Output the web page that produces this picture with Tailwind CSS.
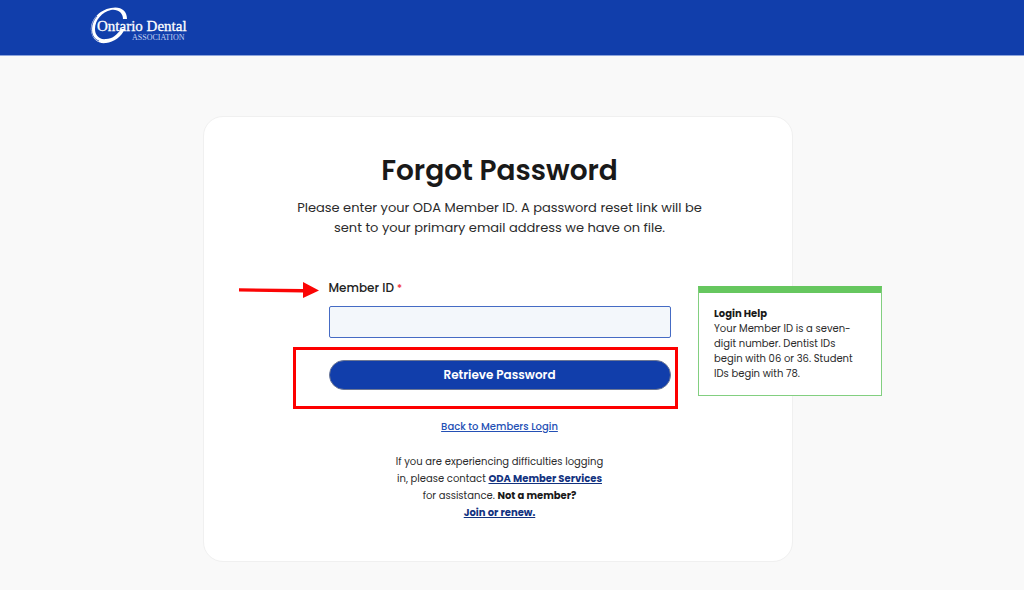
<!DOCTYPE html>
<html lang="en">
<head>
  <meta charset="UTF-8" />
  <meta name="viewport" content="width=device-width, initial-scale=1.0"/>
  <title>Forgot Password - Ontario Dental Association</title>
  <script src="https://cdn.jsdelivr.net/npm/@tailwindcss/browser@4"></script>
</head>
<body class="min-h-screen bg-[#f9f9f9] font-[Poppins,Inter,sans-serif] text-[#2b2b2b]">

  <!-- Header -->
  <header class="h-14 bg-[#113eab] border-b border-[#8da4dc] px-[88px] py-1">
    <a href="#" aria-label="Ontario Dental Association" class="inline-block">
      <svg class="h-11 w-[104px]" viewBox="0 0 104 44" fill="white">
        <path d="M39 15C39 6 32 2 23 4C11 6 2 16 3 27C4 35 10 40 18 39C26 38 33 33 37 25L33 25C29 31 24 35 18 35C11 36 7 31 7 25C7 16 14 8 23 6C30 5 35 9 35 15Z"/>
        <path d="M9 12C1 21 2 34 11 37" fill="none" stroke="#113eab" stroke-width=".8"/>
        <text x="9" y="27" font-size="15" font-family="Liberation Serif, serif" stroke="white" stroke-width=".3">Ontario Dental</text>
        <text x="44" y="36" font-size="8" font-family="Liberation Serif, serif" fill="#c3d0f0">ASSOCIATION</text>
      </svg>
    </a>
  </header>

  <main class="flex justify-center pt-[60px] pb-7 pr-7">
    <div class="relative w-full max-w-[590px] rounded-[20px] border border-[#f0f0f0] bg-white pl-[3px] pt-8 pb-10 text-center">
      <h1 class="text-[28px] leading-[44px] font-semibold text-[#191919]">Forgot Password</h1>
      <p class="mx-auto mt-[5px] max-w-[430px] text-[13px] leading-5">
        Please enter your ODA Member ID. A password reset link will be sent to your primary email address we have on file.
      </p>

      <form class="mx-auto mt-10 w-[342px]">
        <!-- Member ID -->
        <div class="relative">
          <label for="memberId" class="block text-left text-xs leading-5 font-medium text-[#222]">Member ID <span class="text-[10px] leading-none text-[#f03040]">*</span></label>
          <svg class="absolute -left-[90px] top-[3px] h-5 w-20" viewBox="0 0 80 20" fill="#fb0505" aria-hidden="true">
            <path d="M0 7.2L64 8V1L80 9.5L64 17V11.4L0 10.6Z"/>
          </svg>
        </div>
        <input type="text" id="memberId" required class="mt-2 block h-8 w-full rounded-xs border border-[#456bc4] bg-[#f3f7fb] px-3 text-xs" />

        <!-- Submit Button -->
        <div class="relative mt-[22px]">
          <button type="submit" class="block h-[30px] w-full rounded-full border border-[#6d7895] bg-[#113eab] text-xs font-semibold text-white">Retrieve Password</button>
          <span class="pointer-events-none absolute -left-9 -right-[7px] -top-[13px] h-[62px] border-3 border-[#fd0000]"></span>
        </div>
      </form>

      <a href="#" class="mt-[27px] inline-block text-[10px] leading-5 font-medium text-[#2450b5] underline">Back to Members Login</a>

      <p class="mx-auto mt-4 w-[220px] text-[10px] leading-[17px]">
        If you are experiencing difficulties logging in, please contact <a href="#" class="font-bold text-[#12327f] underline">ODA Member Services</a> for assistance. <strong class="text-[#191919]">Not a member?</strong><br />
        <a href="#" class="font-bold text-[#12327f] underline">Join or renew.</a>
      </p>

      <!-- Login Help -->
      <aside class="absolute -right-[90px] top-[169px] w-[184px] border border-t-7 border-[#82cf80] border-t-[#66c75f] bg-white pl-[15px] pr-5 pt-[14px] pb-[14px] text-left text-[10px]">
        <h2 class="font-bold leading-[14px] text-[#191919]">Login Help</h2>
        <p class="leading-[15px]">Your Member ID is a seven-digit number. Dentist IDs begin with 06 or 36. Student IDs begin with 78.</p>
      </aside>
    </div>
  </main>

</body>
</html>
